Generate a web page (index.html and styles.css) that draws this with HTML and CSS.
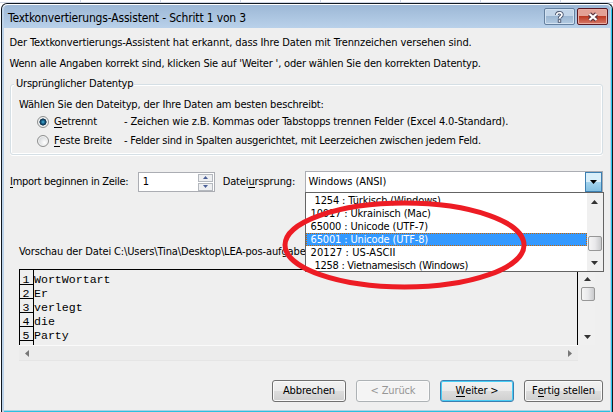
FILE: index.html
```
<!DOCTYPE html>
<html lang="de">
<head>
<meta charset="utf-8">
<title>Textkonvertierungs-Assistent</title>
<link rel="stylesheet" href="styles.css">
</head>
<body>
<div class="sheet"><i></i><i></i><i></i><i></i><i></i><i></i><i></i></div>
<main class="dialog">
  <header class="titlebar">
    <h1>Textkonvertierungs-Assistent - Schritt 1 von 3</h1>
    <span class="winbtn help"><svg width="9" height="12" viewBox="0 0 9 12"><path d="M1.8 4C1.8 1 7 1 7 3.8C7 5.6 4.5 5.4 4.5 7.5" fill="none" stroke="#45516b" stroke-width="3.4"/><rect x="2.8" y="8.3" width="3.4" height="3.4" fill="#45516b"/><path d="M1.8 4C1.8 1 7 1 7 3.8C7 5.6 4.5 5.4 4.5 7.5" fill="none" stroke="#fff" stroke-width="1.7"/><rect x="3.7" y="9.2" width="1.6" height="1.6" fill="#fff"/></svg></span>
    <span class="winbtn close"><svg width="12" height="10" viewBox="0 0 12 10"><path d="M2.5 2L9.5 8M9.5 2L2.5 8" stroke="#5c3540" stroke-width="4.4"/><path d="M2.5 2L9.5 8M9.5 2L2.5 8" stroke="#fff" stroke-width="2.3"/></svg></span>
  </header>
  <div class="content">
    <p class="intro first">Der Textkonvertierungs-Assistent hat erkannt, dass Ihre Daten mit Trennzeichen versehen sind.</p>
    <p class="intro second">Wenn alle Angaben korrekt sind, klicken Sie auf 'Weiter ', oder wählen Sie den korrekten Datentyp.</p>
    <section class="group">
      <h2>Ursprünglicher Datentyp</h2>
      <p class="prompt">Wählen Sie den Dateityp, der Ihre Daten am besten beschreibt:</p>
      <div class="option"><span class="radio on"></span><span class="name"><u>G</u>etrennt</span><span class="desc1">- Zeichen wie z.B. Kommas oder Tabstopps trennen Felder (Excel 4.0-Standard).</span></div>
      <div class="option"><span class="radio"></span><span class="name"><u>F</u>este Breite</span><span class="desc2">- Felder sind in Spalten ausgerichtet, mit Leerzeichen zwischen jedem Feld.</span></div>
    </section>
    <div class="import">
      <span class="import-label"><u>I</u>mport beginnen in Zeile:</span>
      <div class="spin"><span>1</span><div class="steps"><b><svg width="5" height="3"><path d="M0 3L2.5 0L5 3z"/></svg></b><b><svg width="5" height="3"><path d="M0 0L2.5 3L5 0z"/></svg></b></div></div>
      <span class="origin-label">Datei<u>u</u>rsprung:</span>
      <div class="combo"><span>Windows (ANSI)</span><b><svg width="7" height="4"><path d="M0 0H7L3.5 4z"/></svg></b>
        <div class="menu">
          <ul>
            <li class="narrow w1254">1254 : Türkisch (Windows)</li>
            <li>10017 : Ukrainisch (Mac)</li>
            <li>65000 : Unicode (UTF-7)</li>
            <li class="selected">65001 : Unicode (UTF-8)</li>
            <li class="ascii">20127 : US-ASCII</li>
            <li class="narrow w1258">1258 : Vietnamesisch (Windows)</li>
          </ul>
          <div class="vbar"><svg width="7" height="4"><path d="M0 4L3.5 0L7 4z"/></svg><span class="thumb"></span><svg width="7" height="4"><path d="M0 0H7L3.5 4z"/></svg></div>
        </div>
      </div>
    </div>
    <p class="caption">Vorschau der Datei C:\Users\Tina\Desktop\LEA-pos-aufgabe</p>
    <div class="preview">
      <div class="rows">
        <div><span>1</span>WortWortart</div>
        <div><span>2</span>Er</div>
        <div><span>3</span>verlegt</div>
        <div><span>4</span>die</div>
        <div><span>5</span>Party</div>
        <div class="cut"><span></span></div>
      </div>
      <div class="vbar side"><svg width="7" height="4"><path d="M0 4L3.5 0L7 4z"/></svg><span class="thumb"></span><svg width="7" height="4"><path d="M0 0H7L3.5 4z"/></svg></div>
    </div>
    <div class="hbar"><svg width="4" height="7"><path d="M4 0V7L0 3.5z"/></svg><svg width="4" height="7"><path d="M0 0V7L4 3.5z"/></svg></div>
    <footer>
      <button class="cancel">Abbrechen</button>
      <button class="back" disabled>&lt; Zurück</button>
      <button class="next"><u>W</u>eiter &gt;</button>
      <button class="finish">F<u>e</u>rtig stellen</button>
    </footer>
  </div>
</main>
<svg class="marker" width="248" height="94" viewBox="0 0 248 94"><ellipse cx="124.5" cy="47" rx="119.5" ry="42" fill="none" stroke="#ed1c24" stroke-width="5"/></svg>
</body>
</html>
```
FILE: styles.css
```
* { box-sizing: border-box; }
body {
  margin: 0; width: 613px; height: 412px; overflow: hidden;
  display: flex; flex-direction: column; background: #fff;
  font: 11px/14px "DejaVu Sans Condensed", "DejaVu Sans", sans-serif;
  color: #000; white-space: nowrap;
}
h1, h2, p, ul { margin: 0; padding: 0; font-weight: normal; }
ul { list-style: none; }
u { text-decoration: none; box-shadow: 0 -1px 0 #000 inset; display: inline-block; height: 13px; line-height: 14px; vertical-align: top; }
svg { display: block; flex: none; }

.sheet { display: flex; height: 3px; border-bottom: 1px solid #d0d7e5; }
.sheet i { width: 80px; border-right: 1px solid #d0d7e5; flex: none; }
.sheet i:first-child { width: 81px; }

.dialog {
  width: 612px; height: 409px; margin-left: 1px;
  display: flex; flex-direction: column;
  border: 1px solid #101820; border-bottom: 0;
  border-radius: 6px 6px 0 0; background: #efefef;
  box-shadow: inset 0 1px #fff, inset 2px 0 #bdd3e9, inset -1px 0 #2cc8ec, inset -2px 0 #bdd3e9, inset 0 -1px #2cc0e0, inset 0 -2px #a9d3e6;
}
.titlebar {
  height: 23px; margin: 1px 2px 0 2px; display: flex; align-items: flex-start;
  border-radius: 4px 4px 0 0; background: linear-gradient(#9db8d6, #b9d1ea);
}
.titlebar h1 { flex: 1; margin: 5px 0 0 4px; font-size: 12px; line-height: 16px; letter-spacing: -.17px; }
.winbtn { width: 31px; height: 17px; margin-top: 3px; display: flex; align-items: center; justify-content: center; border: 1px solid #64809f; border-radius: 2px; box-shadow: inset 0 0 0 1px #d3e2f1; }
.help { background: linear-gradient(#c2d5e9 50%, #9cb7d3 50%, #b3cbe2); margin-right: 2px; }
.close { margin-right: 2px; border-color: #5a1a24; background: linear-gradient(#e3a196 45%, #bd3b24 50%, #d6796a); box-shadow: inset 0 0 0 1px #eaada3; }

.content { display: flex; flex-direction: column; padding: 0 9px 0 8px; }
.intro { height: 21px; line-height: 14px; margin-left: -.5px; }
.first { margin-top: 8px; letter-spacing: -.105px; }
.second { letter-spacing: -.18px; }

.group { height: 71px; margin: 6px 0 0; border: 1px solid #d5dfe5; border-radius: 3px; box-shadow: inset 1px 1px #fff, inset -1px -1px #fff, 0 1px #fff; display: flex; flex-direction: column; align-items: flex-start; }
.group h2 { margin: -8px 0 0 3px; padding: 0 1px 0 2px; font-size: 11px; line-height: 14px; background: #efefef; letter-spacing: -.21px; }
.prompt { margin: 7px 0 0 8px; letter-spacing: -.16px; }
.option { height: 19px; margin-left: 26px; display: flex; align-items: center; }
.radio { width: 12px; height: 12px; border-radius: 50%; border: 1px solid #8e8f8f; background: radial-gradient(circle at 65% 65%, #fff, #d4d7da 70%); box-shadow: inset 0 0 0 1px #f4f4f4; }
.radio.on { background: radial-gradient(circle, #43b5dc 0, #15547c 2px, #0c2c44 3.3px, #dfe5e8 3.8px); }
.name { width: 70px; margin-left: 5px; letter-spacing: -.12px; }
.desc1 { letter-spacing: -.135px; }
.desc2 { letter-spacing: -.22px; }

.import { height: 22px; margin-top: 16px; display: flex; align-items: center; }
.import-label { width: 128px; letter-spacing: -.28px; }
.spin { width: 77px; height: 20px; display: flex; align-items: center; justify-content: space-between; padding: 0 1px 0 4px; border: 1px solid #abadb3; background: #fff; }
.steps { width: 15px; height: 17px; display: flex; flex-direction: column; gap: 1px; }
.steps b { flex: 1; display: flex; align-items: center; justify-content: center; border: 1px solid #b4b8be; background: #eeeff1; }
.steps path { fill: #4a5f97; }
.origin-label { width: 82px; margin-left: 8px; letter-spacing: -.14px; }
.combo { position: relative; align-self: flex-start; width: 299px; height: 22px; display: flex; align-items: center; justify-content: space-between; padding-left: 3px; border: 1px solid #abadb3; background: #fff; letter-spacing: -.05px; }
.combo > b { width: 17px; height: 20px; display: flex; align-items: center; justify-content: center; border: 1px solid #3c7fb1; background: linear-gradient(#d9effa 50%, #a5d4ee 50%, #83c0e2); }
.menu { position: absolute; left: -1px; top: 20px; width: 299px; height: 80px; display: flex; border: 1px solid #646464; background: #fff; overflow: hidden; z-index: 2; }
.menu ul { width: 281px; padding-top: 1px; }
.menu li { height: 13px; line-height: 13px; padding-left: 5px; letter-spacing: -.15px; }
.menu .ascii { letter-spacing: .08px; }
.menu .narrow { padding-left: 9px; }
.menu .w1254 { letter-spacing: -.15px; }
.menu .w1258 { letter-spacing: -.28px; }
.menu .selected { background: #3399ff; color: #fff; outline: 1px dotted #cc6600; outline-offset: -1px; }

.vbar { width: 16px; display: flex; flex-direction: column; align-items: center; background: #f0f0f0; padding: 7px 0 6px; }
.vbar path { fill: #333; }
.thumb { width: 14px; height: 15px; border: 1px solid #979797; border-radius: 2px; background: linear-gradient(90deg, #f5f5f5, #e9e9eb 50%, #c9cacc); }
.menu .thumb { margin: 32px 0 10px; }

.caption { margin: 52px 0 0 9px; letter-spacing: -.13px; }
.preview { height: 76px; margin: 10px 0 0 9px; display: flex; }
.rows { width: 559px; border: solid #000; border-width: 1px 1px 0; overflow: hidden; font: 11.6px/14px "Liberation Mono", monospace; }
.rows div { display: flex; height: 14px; line-height: 17px; }
.rows div:first-child { height: 15px; line-height: 19px; }
.rows span { width: 14px; border: solid #000; border-width: 0 1px 1px 0; text-align: center; padding-right: 1px; flex: none; }
.rows .cut span { border-bottom: 0; }
.side { width: 15px; margin: 3px 0 0 2px; padding: 5px 0 6px; }
.side .thumb { margin: 6px 0 34px; height: 15px; }
.hbar { width: 559px; height: 16px; margin-left: 9px; padding: 0 6px; display: flex; align-items: center; justify-content: space-between; background: #ececec; border-top: 1px solid #fafafa; border-bottom: 1px solid #e5e5e5; }
.hbar path { fill: #777; }

footer { margin-top: 19px; display: flex; justify-content: flex-end; gap: 10px; }
button { width: 74px; height: 22px; padding: 0; font: inherit; line-height: 14px; color: #000; border: 1px solid #707070; border-radius: 3px; background: linear-gradient(#f2f2f2, #ebebeb 50%, #dddddd 50%, #cfcfcf); box-shadow: inset 0 0 0 1px #fafafa; letter-spacing: -.15px; }
.back { color: #969696; border-color: #adb2b5; background: #f4f4f4; }
.next { border-color: #3c7fb1; box-shadow: inset 0 0 0 1px #48cdf5; }
.finish { width: 79px; }
.marker { position: absolute; left: 280px; top: 198px; z-index: 5; }
```
